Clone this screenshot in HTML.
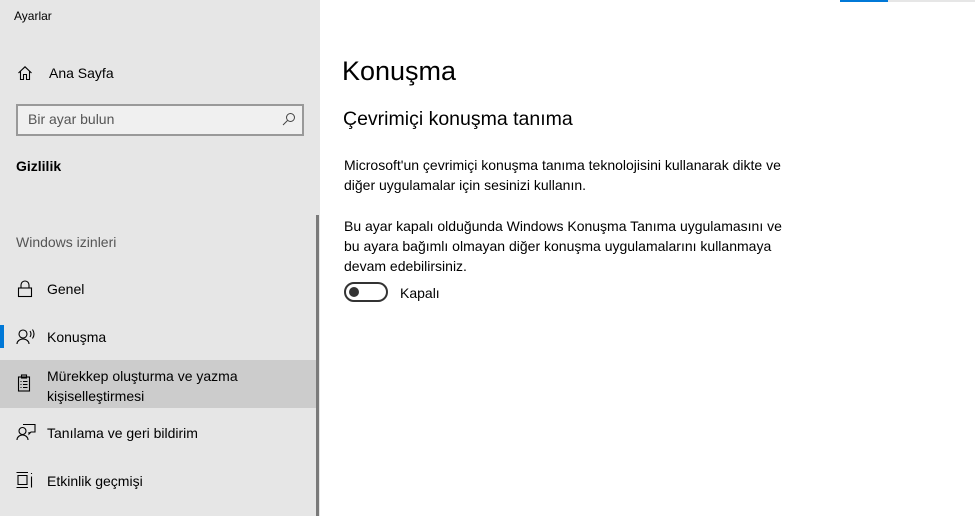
<!DOCTYPE html>
<html><head><meta charset="utf-8"><style>
*{margin:0;padding:0;box-sizing:border-box}
body{width:975px;height:516px;overflow:hidden;background:#fff;font-family:"Segoe UI","Liberation Sans",sans-serif;color:#000;position:relative}
.side{position:absolute;left:0;top:0;width:320px;height:516px;background:#e6e6e6}
.t{position:absolute;white-space:nowrap}
.sb{position:absolute;left:316px;top:215px;width:3px;height:301px;background:#7a7a7a}
.sel{position:absolute;left:0;top:360px;width:316px;height:48px;background:#cccccc}
.acc{position:absolute;left:0;top:325px;width:4px;height:23px;background:#0078d7}
.search{position:absolute;left:16px;top:104px;width:288px;height:32px;border:2px solid #999;background:#f0f0f0}
svg{position:absolute}
</style></head><body>
<div class="side">
<div class="sel"></div>
<div class="acc"></div>
<div class="sb"></div>
<div class="t" style="left:14px;top:9px;font-size:12px">Ayarlar</div>
<svg style="left:17px;top:65px" width="16" height="16" viewBox="0 0 16 16" fill="none" stroke="#000" stroke-width="1.1"><path d="M1.5 8 L8 1.8 L14.5 8 M3.5 6.3 V14.5 H6.5 V9.5 H9.5 V14.5 H12.5 V6.3"/></svg>
<div class="t" style="left:49px;top:65px;font-size:14px">Ana Sayfa</div>
<div class="search"></div>
<div class="t" style="left:28px;top:111px;font-size:14px;color:#555">Bir ayar bulun</div>
<svg style="left:282px;top:112px" width="14" height="14" viewBox="0 0 14 14" fill="none" stroke="#444" stroke-width="1"><circle cx="8.5" cy="5.5" r="4"/><path d="M5.5 8.5 L1 13"/></svg>
<div class="t" style="left:16px;top:158px;font-size:14px;font-weight:bold">Gizlilik</div>
<div class="t" style="left:16px;top:234px;font-size:14px;color:#555">Windows izinleri</div>
<svg style="left:17px;top:280px" width="16" height="18" viewBox="0 0 16 18" fill="none" stroke="#000" stroke-width="1.1"><path d="M4 8 V5 a4 4 0 0 1 8 0 V8"/><rect x="1.5" y="8" width="13" height="8.5"/></svg>
<div class="t" style="left:47px;top:281px;font-size:14px">Genel</div>
<svg style="left:16px;top:329px" width="20" height="16" viewBox="0 0 20 16" fill="none" stroke="#000" stroke-width="1.1"><circle cx="7" cy="5" r="4"/><path d="M1 15 a6 5 0 0 1 12 0 M14 2 q2 3 0 6 M16.5 0.5 q3 4.5 0 9"/></svg>
<div class="t" style="left:47px;top:329px;font-size:14px">Konuşma</div>
<svg style="left:17px;top:374px" width="14" height="18" viewBox="0 0 14 18" fill="none" stroke="#000" stroke-width="1.1"><rect x="1.5" y="3" width="11" height="14"/><rect x="4.5" y="1" width="5" height="3"/><path d="M3.5 7.5h1 M6 7.5h4.5 M3.5 10.5h1 M6 10.5h4.5 M3.5 13.5h1 M6 13.5h4.5"/></svg>
<div class="t" style="left:47px;top:366px;font-size:14px;line-height:20px">Mürekkep oluşturma ve yazma<br>kişiselleştirmesi</div>
<svg style="left:16px;top:423px" width="20" height="18" viewBox="0 0 20 18" fill="none" stroke="#000" stroke-width="1.1"><circle cx="6.5" cy="8" r="3.5"/><path d="M1 17 a5.5 5 0 0 1 11 0 M7 1.5 H19 V9 H15 L13 11 V9"/></svg>
<div class="t" style="left:47px;top:425px;font-size:14px">Tanılama ve geri bildirim</div>
<svg style="left:16px;top:471px" width="18" height="18" viewBox="0 0 18 18" fill="none" stroke="#000" stroke-width="1.1"><path d="M0.5 1.5 H12 M0.5 16.5 H12 M2 4.5 H11 V13.5 H2 Z M15.5 2 V3 M15.5 5.5 V16.5"/></svg>
<div class="t" style="left:47px;top:473px;font-size:14px">Etkinlik geçmişi</div>
</div>
<div style="position:absolute;left:840px;top:0;width:48px;height:2px;background:#0078d7"></div>
<div style="position:absolute;left:888px;top:0;width:87px;height:2px;background:#e6e6e6"></div>
<div class="t" style="left:342px;top:56px;font-size:27px;font-weight:300">Konuşma</div>
<div class="t" style="left:343px;top:108px;font-size:19.5px">Çevrimiçi konuşma tanıma</div>
<div class="t" style="left:344px;top:155px;font-size:14px;line-height:20px">Microsoft'un çevrimiçi konuşma tanıma teknolojisini kullanarak dikte ve<br>diğer uygulamalar için sesinizi kullanın.</div>
<div class="t" style="left:344px;top:216px;font-size:14px;line-height:20px">Bu ayar kapalı olduğunda Windows Konuşma Tanıma uygulamasını ve<br>bu ayara bağımlı olmayan diğer konuşma uygulamalarını kullanmaya<br>devam edebilirsiniz.</div>
<div style="position:absolute;left:344px;top:282px;width:44px;height:20px;border:2px solid #333;border-radius:10px"></div>
<div style="position:absolute;left:349px;top:287px;width:10px;height:10px;border-radius:5px;background:#333"></div>
<div class="t" style="left:400px;top:285px;font-size:14px">Kapalı</div>
</body></html>
